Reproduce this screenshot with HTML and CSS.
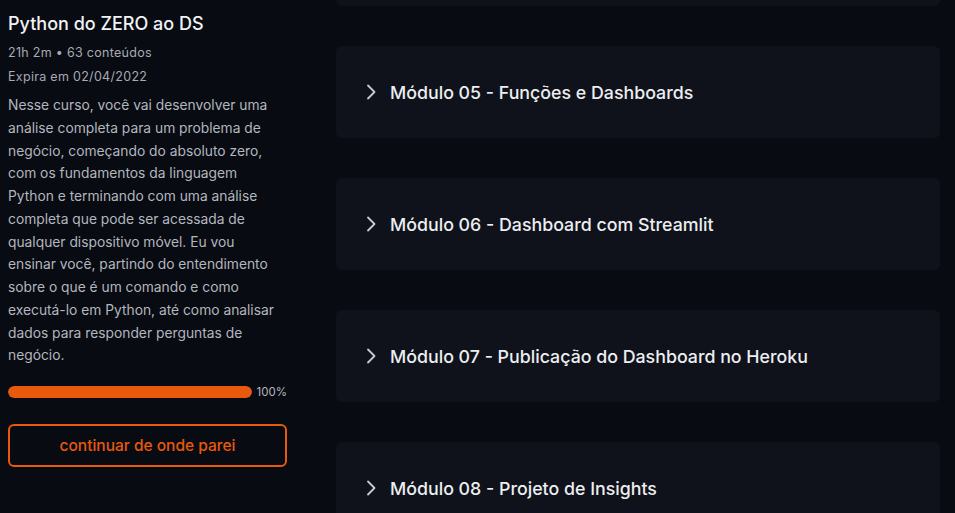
FILE: index.html
```html
<!DOCTYPE html>
<html lang="pt-BR">
<head>
<meta charset="utf-8">
<title>Python do ZERO ao DS</title>
<link rel="stylesheet" href="styles.css">
</head>
<body>
<div class="page">
  <aside class="course">
    <h1 class="course-title">Python do ZERO ao DS</h1>
    <p class="course-meta">21h 2m • 63 conteúdos</p>
    <p class="course-meta">Expira em 02/04/2022</p>
    <p class="course-desc">Nesse curso, você vai desenvolver uma análise completa para um problema de negócio, começando do absoluto zero, com os fundamentos da linguagem Python e terminando com uma análise completa que pode ser acessada de qualquer dispositivo móvel. Eu vou ensinar você, partindo do entendimento sobre o que é um comando e como executá-lo em Python, até como analisar dados para responder perguntas de negócio.</p>
    <div class="progress">
      <div class="progress-track"><div class="progress-fill" style="width:100%"></div></div>
      <span class="progress-label">100%</span>
    </div>
    <button class="continue-btn">continuar de onde parei</button>
  </aside>
  <main class="modules">
    <div class="module module-cut"></div>
    <div class="module">
      <svg class="chev" viewBox="0 0 10 16" width="10" height="16"><path d="M2 1.5 L8.5 8 L2 14.5" fill="none" stroke="currentColor" stroke-width="1.8" stroke-linecap="round" stroke-linejoin="round"/></svg>
      <span class="module-title">Módulo 05 - Funções e Dashboards</span>
    </div>
    <div class="module">
      <svg class="chev" viewBox="0 0 10 16" width="10" height="16"><path d="M2 1.5 L8.5 8 L2 14.5" fill="none" stroke="currentColor" stroke-width="1.8" stroke-linecap="round" stroke-linejoin="round"/></svg>
      <span class="module-title">Módulo 06 - Dashboard com Streamlit</span>
    </div>
    <div class="module">
      <svg class="chev" viewBox="0 0 10 16" width="10" height="16"><path d="M2 1.5 L8.5 8 L2 14.5" fill="none" stroke="currentColor" stroke-width="1.8" stroke-linecap="round" stroke-linejoin="round"/></svg>
      <span class="module-title">Módulo 07 - Publicação do Dashboard no Heroku</span>
    </div>
    <div class="module">
      <svg class="chev" viewBox="0 0 10 16" width="10" height="16"><path d="M2 1.5 L8.5 8 L2 14.5" fill="none" stroke="currentColor" stroke-width="1.8" stroke-linecap="round" stroke-linejoin="round"/></svg>
      <span class="module-title">Módulo 08 - Projeto de Insights</span>
    </div>
  </main>
</div>
</body>
</html>
```
FILE: styles.css
```css
html, body {
  margin: 0;
  padding: 0;
  background: #080b12;
  height: 100%;
  overflow: hidden;
}
body {
  font-family: "Inter", "Noto Sans", sans-serif;
  color: #e9eaee;
}
.page {
  display: flex;
  gap: 49px;
  padding-left: 8px;
}
.course {
  width: 279px;
  flex: none;
  display: flex;
  flex-direction: column;
}
.course-title {
  margin: 12px 0 0;
  font-size: 18px;
  line-height: 24px;
  font-weight: 500;
  color: #f1f2f4;
}
.course-meta {
  margin: 4px 0 0;
  font-size: 12.5px;
  letter-spacing: 0.3px;
  line-height: 20px;
  color: #a7aab2;
}
.course-meta:first-of-type {
  margin-top: 7px;
}
.course-desc {
  width: 278px;
  margin: 7px 0 0;
  font-size: 13.8px;
  line-height: 22.75px;
  color: #b3b6be;
}
.progress {
  display: flex;
  align-items: center;
  gap: 5px;
  margin-top: 18px;
}
.progress-track {
  width: 244px;
  height: 12px;
  border-radius: 6px;
  background: #2a2d35;
  overflow: hidden;
}
.progress-fill {
  height: 100%;
  background: #e8590c;
  border-radius: 6px;
}
.progress-label {
  font-size: 11.5px;
  color: #b3b6be;
}
.continue-btn {
  margin-top: 25px;
  height: 43px;
  background: transparent;
  border: 2px solid #e8590c;
  border-radius: 6px;
  color: #e8590c;
  font-family: inherit;
  font-size: 15.5px;
  font-weight: 500;
  cursor: pointer;
}
.modules {
  width: 604px;
  display: flex;
  flex-direction: column;
  gap: 40px;
}
.module {
  height: 92px;
  background: #0f121a;
  border-radius: 6px;
  display: flex;
  align-items: center;
  padding-left: 30px;
  gap: 14px;
  flex: none;
}
.module-cut {
  height: 6px;
  border-radius: 0 0 6px 6px;
}
.chev {
  color: #c9cbd1;
}
.module-title {
  font-size: 17.8px;
  font-weight: 500;
  color: #eceef1;
}
```
